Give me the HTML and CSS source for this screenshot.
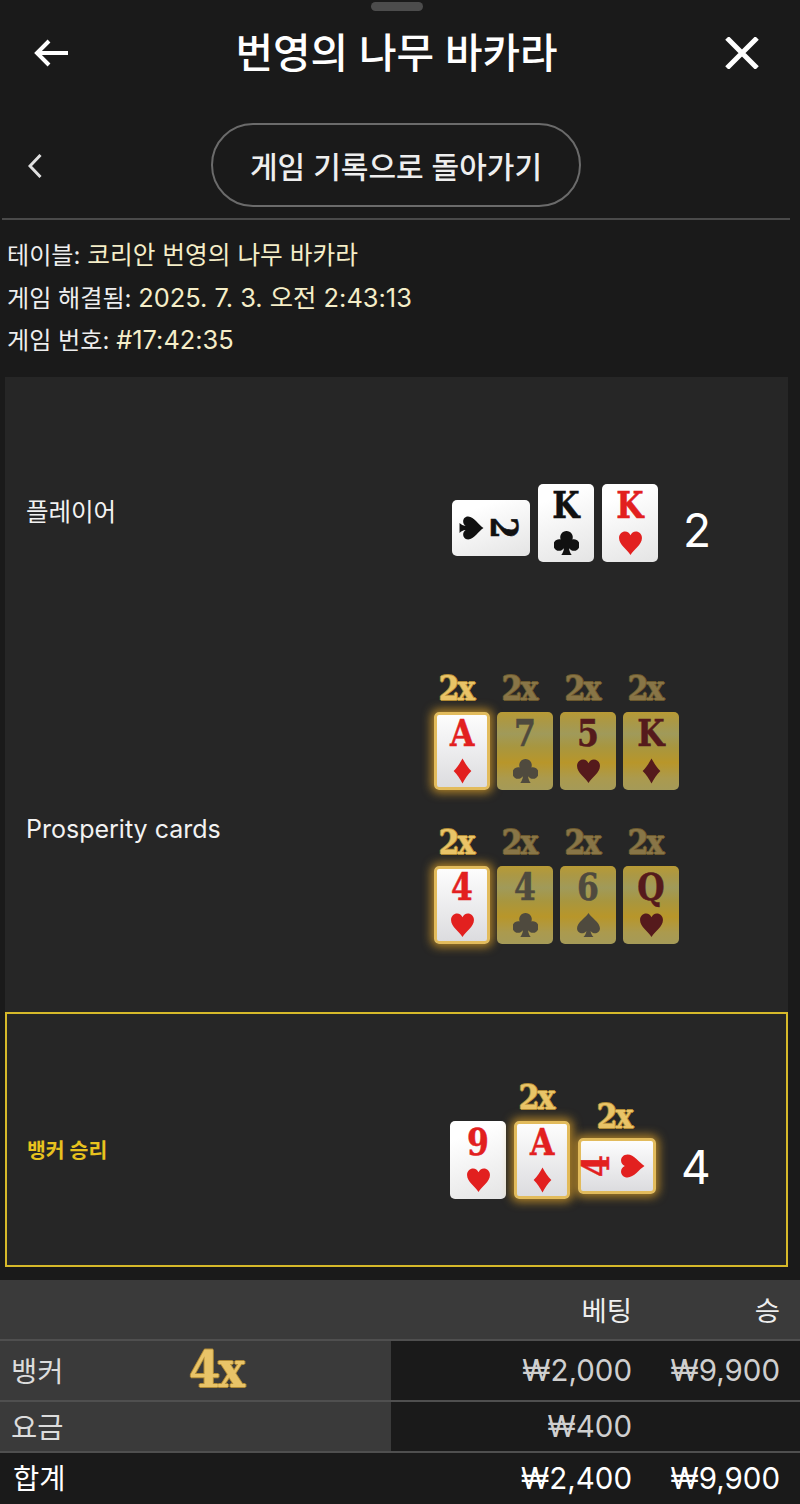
FILE: index.html
```html
<!DOCTYPE html>
<html lang="ko">
<head>
<meta charset="utf-8">
<title>번영의 나무 바카라</title>
<link rel="stylesheet" href="styles.css">
</head>
<body>
<svg class="defs" width="0" height="0" aria-hidden="true">
  <symbol id="heart" viewBox="0 0 24 24"><path d="M12 23.5C9 18.5 1 13.5 1 7.2 1 3.4 3.9 1 6.8 1 9.2 1 11 2.4 12 4.6 13 2.4 14.800 1 17.200 1 20.100 1 23 3.400 23 7.200 23 13.500 15 18.500 12 23.500Z"/></symbol>
  <symbol id="diamond" viewBox="0 0 24 24"><path d="M12 0C14.500 4.500 17 8.500 20.500 12 17 15.500 14.500 19.500 12 24 9.500 19.500 7 15.500 3.500 12 7 8.500 9.500 4.500 12 0Z"/></symbol>
  <symbol id="club" viewBox="0 0 24 24"><path d="M12 0.500A6 6 0 0 1 17.600 8.700C18.100 8.600 18.500 8.500 19 8.500A5.500 5.500 0 1 1 14.500 17.100C14.700 19.600 15.500 21.700 17 23.500H7C8.500 21.700 9.300 19.600 9.500 17.100A5.500 5.500 0 1 1 5 8.500C5.500 8.500 5.900 8.600 6.400 8.700A6 6 0 0 1 12 0.500Z"/></symbol>
  <symbol id="spade" viewBox="0 0 24 24"><path d="M12 0.500C14.500 5 23 9.500 23 15.200 23 18.500 20.500 20 18.300 20 16.600 20 15 19.200 14 17.700 14.300 20 15.200 21.900 16.800 23.500H7.200C8.800 21.900 9.700 20 10 17.700 9 19.200 7.400 20 5.700 20 3.500 20 1 18.500 1 15.200 1 9.500 9.500 5 12 0.500Z"/></symbol>
</svg>

<div class="handle"></div>

<header class="top">
  <svg class="icon-back" viewBox="0 0 34 28" aria-hidden="true"><path d="M15 2 3 14l12 12M3 14h31"/></svg>
  <h1 class="title">번영의 나무 바카라</h1>
  <svg class="icon-close" viewBox="0 0 34 32" aria-hidden="true"><path d="M2 1 32 31M32 1 2 31"/></svg>
</header>

<nav class="nav">
  <svg class="icon-chevron" viewBox="0 0 14 24" aria-hidden="true"><path d="M12.500 1 2 12l10.500 11"/></svg>
  <button class="pill">게임 기록으로 돌아가기</button>
</nav>

<section class="info">
  <p class="info-line first">테이블: <span class="val">코리안 번영의 나무 바카라</span></p>
  <p class="info-line">게임 해결됨: <span class="val num">2025. 7. 3. 오전 2:43:13</span></p>
  <p class="info-line">게임 번호: <span class="val num">#17:42:35</span></p>
</section>

<main class="panel">
  <section class="row row-player">
    <div class="label">플레이어</div>
    <div class="hand">
      <div class="card side black cw"><svg class="suit"><use href="#spade"/></svg><span class="rank">2</span></div>
      <div class="card black"><span class="rank">K</span><svg class="suit"><use href="#club"/></svg></div>
      <div class="card red"><span class="rank">K</span><svg class="suit"><use href="#heart"/></svg></div>
      <div class="score">2</div>
    </div>
  </section>

  <section class="row row-prosperity">
    <div class="label">Prosperity cards</div>
    <div class="pros">
      <div class="pros-row">
        <div class="pcell"><div class="mult">2x</div><div class="card lit red"><span class="rank">A</span><svg class="suit"><use href="#diamond"/></svg></div></div>
        <div class="pcell dim"><div class="mult">2x</div><div class="card gold dk"><span class="rank">7</span><svg class="suit"><use href="#club"/></svg></div></div>
        <div class="pcell dim"><div class="mult">2x</div><div class="card gold mar"><span class="rank">5</span><svg class="suit"><use href="#heart"/></svg></div></div>
        <div class="pcell dim"><div class="mult">2x</div><div class="card gold mar"><span class="rank">K</span><svg class="suit"><use href="#diamond"/></svg></div></div>
      </div>
      <div class="pros-row">
        <div class="pcell"><div class="mult">2x</div><div class="card lit red"><span class="rank">4</span><svg class="suit"><use href="#heart"/></svg></div></div>
        <div class="pcell dim"><div class="mult">2x</div><div class="card gold dk"><span class="rank">4</span><svg class="suit"><use href="#club"/></svg></div></div>
        <div class="pcell dim"><div class="mult">2x</div><div class="card gold dk"><span class="rank">6</span><svg class="suit"><use href="#spade"/></svg></div></div>
        <div class="pcell dim"><div class="mult">2x</div><div class="card gold mar"><span class="rank">Q</span><svg class="suit"><use href="#heart"/></svg></div></div>
      </div>
    </div>
  </section>

  <section class="row row-banker">
    <div class="label win">뱅커 승리</div>
    <div class="hand banker-hand">
      <div class="card red"><span class="rank">9</span><svg class="suit"><use href="#heart"/></svg></div>
      <div class="pcell"><div class="mult">2x</div><div class="card lit red"><span class="rank">A</span><svg class="suit"><use href="#diamond"/></svg></div></div>
      <div class="pcell pcell-side"><div class="mult">2x</div><div class="card side lit red ccw"><span class="rank">4</span><svg class="suit"><use href="#heart"/></svg></div></div>
      <div class="score">4</div>
    </div>
  </section>
</main>

<section class="bets">
  <div class="bets-row head">
    <div class="cell-name"></div>
    <div class="amt">베팅</div>
    <div class="amt">승</div>
  </div>
  <div class="bets-row h-bank">
    <div class="cell-name"><span class="name">뱅커</span><span class="big-mult">4x</span></div>
    <div class="amt">₩2,000</div>
    <div class="amt">₩9,900</div>
  </div>
  <div class="bets-row h-fee">
    <div class="cell-name"><span class="name">요금</span></div>
    <div class="amt">₩400</div>
    <div class="amt"></div>
  </div>
  <div class="bets-row total">
    <div class="cell-name"><span class="name">합계</span></div>
    <div class="amt">₩2,400</div>
    <div class="amt">₩9,900</div>
  </div>
</section>
</body>
</html>
```
FILE: styles.css
```css
* { box-sizing: border-box; }
html, body { margin: 0; padding: 0; }
body {
  width: 800px;
  height: 1504px;
  overflow: hidden;
  background: #1a1a1a;
  color: #fff;
  font-family: Inter, "Noto Sans CJK KR", sans-serif;
}
.defs { position: absolute; }

.handle {
  width: 52px;
  height: 9px;
  margin: 2px 0 0 371px;
  border-radius: 5px;
  background: #4c4c4c;
}

.top {
  height: 84px;
  padding: 0 41px 0 34px;
  display: flex;
  align-items: center;
  justify-content: space-between;
}
.title {
  margin: 0;
  font-size: 40.800px;
  font-weight: 500;
  line-height: 1;
  letter-spacing: 0;
}
.icon-back { width: 34px; height: 28px; fill: none; stroke: #fff; stroke-width: 4; }
.icon-close { width: 34px; height: 32px; fill: none; stroke: #fff; stroke-width: 5; }

.nav {
  height: 84px;
  margin-top: 28px;
  position: relative;
  display: flex;
  align-items: center;
  padding-left: 211px;
}
.icon-chevron {
  position: absolute;
  left: 28px;
  top: 31px;
  width: 14px;
  height: 24px;
  fill: none;
  stroke: #e0e0e0;
  stroke-width: 3;
}
.pill {
  width: 370px;
  height: 84px;
  padding: 0;
  border: 2px solid #6b6b6b;
  border-radius: 42px;
  background: transparent;
  color: #eee;
  font: 500 30px Inter, "Noto Sans CJK KR", sans-serif;
}

.info {
  margin: 11px 10px 0 2px;
  border-top: 2px solid #4a4a4a;
  padding: 0 0 0 5px;
}
.info-line {
  margin: 0;
  height: 42.500px;
  line-height: 42.500px;
  font-size: 24.100px;
  color: #eee;
}
.info-line.first { margin-top: 14px; }
.val { color: #f5eec8; font-size: 24.700px; }
.val.num { font-size: 25.400px; }

.panel {
  margin: 15px 12px 0 5px;
  height: 890px;
  background: #262626;
}
.row {
  display: grid;
  grid-template-columns: 420px 1fr;
  align-items: center;
}
.row-player { height: 270px; }
.row-prosperity { height: 365px; }
.row-banker { height: 255px; border: 2px solid #d6b92a; }
.label {
  padding-left: 21px;
  font-size: 24.500px;
  color: #f2f2f2;
  margin-top: -3px;
}
.row-prosperity .label { font-size: 25px; margin-top: 0; }
.row-banker .label { padding-top: 20px; padding-left: 20px; margin-top: 0; }
.label.win {
  font-size: 20.500px;
  font-weight: 700;
  color: #e8c21e;
}

.hand {
  display: flex;
  align-items: flex-end;
  gap: 8px;
  padding-left: 27px;
  padding-top: 22px;
}
.banker-hand {
  padding-left: 23px;
  padding-top: 2px;
}
.score {
  margin-left: 17px;
  font-size: 46px;
  color: #fff;
  line-height: 1;
  margin-bottom: 9px;
}
.banker-hand .score { margin-left: 17px; margin-bottom: 9px; }

.card {
  width: 56px;
  height: 78px;
  flex: none;
  border-radius: 5px;
  background: linear-gradient(160deg, #ffffff 20%, #e4e4e4 100%);
  display: flex;
  flex-direction: column;
  align-items: center;
  justify-content: space-between;
  padding: 6px 0;
}
.rank {
  font-family: "DejaVu Serif Condensed", "DejaVu Serif", serif;
  font-weight: 700;
  font-size: 38px;
  line-height: 30px;
  height: 30px;
  transform: scaleX(.92);
  -webkit-text-stroke: .5px currentColor;
}
.suit { width: 25px; height: 26px; fill: currentColor; flex: none; }
.black { color: #111; }
.red { color: #e2201f; }
.dk { color: #4f4a3e; }
.mar { color: #551a1c; }

.card.side {
  width: 78px;
  height: 56px;
  flex-direction: row;
  justify-content: flex-start;
  gap: 8px;
  padding: 0 0 0 7px;
  margin-bottom: 5px;
}
.card.side.cw { margin-bottom: 6px; }
.cw .rank { transform: rotate(90deg) scaleX(.92); }
.ccw .rank { transform: rotate(-90deg) scaleX(.92); }
.cw .suit { transform: rotate(90deg); }
.ccw .suit { transform: rotate(-90deg); }
.ccw.card.side { gap: 12px; padding-left: 5px; }

.card.lit {
  border: 3px solid #e2bb5c;
  box-shadow: 0 0 10px 3px rgba(228, 165, 40, .7);
  background: linear-gradient(180deg, #fdfdfd 0%, #dcdcdf 100%);
  padding: 3px 0;
}
.card.side.lit { padding: 0 0 0 3px; }
.card.gold {
  background: linear-gradient(180deg, #b89a35 0%, #ab9845 12%, #a09a5a 28%, #a8963f 45%, #b8962a 65%, #ab9a4e 85%, #a59a58 100%);
}

.pros { align-self: start; padding: 25px 0 0 9px; display: flex; flex-direction: column; gap: 36px; }
.pros-row { display: flex; gap: 7px; height: 118px; }
.pcell { display: flex; flex-direction: column; align-items: center; flex: none; }
.mult {
  font-family: "DejaVu Serif Condensed", "DejaVu Serif", serif;
  font-weight: 700;
  font-size: 33px;
  line-height: 34px;
  height: 40px;
  letter-spacing: -2px;
  margin-left: -12px;
  color: #e9c468;
  text-shadow: 0 1px 0 #b08a35, 0 -1px 0 #b08a35, 1px 0 0 #b08a35, -1px 0 0 #b08a35;
}
.pcell-side .mult { margin-left: -6px; height: 38px; }
.dim .mult { opacity: .5; }

.bets { margin-top: 13px; }
.bets-row {
  display: grid;
  grid-template-columns: 391px 241px 148px;
  align-items: center;
  font-size: 29.500px;
  color: #cfcfcf;
}
.cell-name {
  height: 100%;
  display: flex;
  align-items: center;
  background: #3a3a3a;
  padding: 0 0 2px 11px;
  position: relative;
}
.name { color: #dcdcdc; font-size: 28.500px; }
.amt { text-align: right; }
.head { height: 59px; background: #3a3a3a; color: #eee; font-size: 27.500px; }
.h-bank, .h-fee, .total { border-top: 2px solid #4f4f4f; }
.h-bank { height: 61px; }
.h-fee { height: 51px; }
.total { height: 53px; color: #fff; }
.total .cell-name { background: transparent; padding: 0 0 4px 13px; }
.total .name { color: #fff; }
.big-mult {
  position: absolute;
  left: 189px;
  top: 1px;
  font-family: "DejaVu Serif Condensed", "DejaVu Serif", serif;
  font-weight: 700;
  font-size: 50px;
  line-height: 56px;
  letter-spacing: -2px;
  color: #e9c468;
  text-shadow: 0 1px 0 #b08a35, 0 -1px 0 #b08a35, 1px 0 0 #b08a35, -1px 0 0 #b08a35;
}
```
